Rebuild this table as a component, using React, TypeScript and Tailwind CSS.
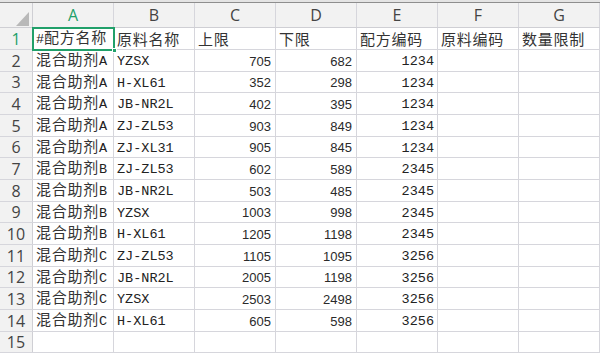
import React from 'react'

const cols = ['A', 'B', 'C', 'D', 'E', 'F', 'G']

type Row = [string, string, string, string, string, string, string]

const rows: Row[] = [
  ['#配方名称', '原料名称', '上限', '下限', '配方编码', '原料编码', '数量限制'],
  ['混合助剂A', 'YZSX', '705', '682', '1234', '', ''],
  ['混合助剂A', 'H-XL61', '352', '298', '1234', '', ''],
  ['混合助剂A', 'JB-NR2L', '402', '395', '1234', '', ''],
  ['混合助剂A', 'ZJ-ZL53', '903', '849', '1234', '', ''],
  ['混合助剂A', 'ZJ-XL31', '905', '845', '1234', '', ''],
  ['混合助剂B', 'ZJ-ZL53', '602', '589', '2345', '', ''],
  ['混合助剂B', 'JB-NR2L', '503', '485', '2345', '', ''],
  ['混合助剂B', 'YZSX', '1003', '998', '2345', '', ''],
  ['混合助剂B', 'H-XL61', '1205', '1198', '2345', '', ''],
  ['混合助剂C', 'ZJ-ZL53', '1105', '1095', '3256', '', ''],
  ['混合助剂C', 'JB-NR2L', '2005', '1198', '3256', '', ''],
  ['混合助剂C', 'YZSX', '2503', '2498', '3256', '', ''],
  ['混合助剂C', 'H-XL61', '605', '598', '3256', '', ''],
  ['', '', '', '', '', '', ''],
]

const rowHeights = ['h-[22px]', 'h-[22px]', 'h-[21px]']

// latin bits in the Song-style cells are half width, CJK stays full width
function MixedText({ text }: { text: string }) {
  const parts: { s: string; latin: boolean }[] = []
  for (const ch of text) {
    const latin = ch.charCodeAt(0) < 128
    const last = parts[parts.length - 1]
    if (last && last.latin === latin) last.s += ch
    else parts.push({ s: ch, latin })
  }
  return (
    <span className="leading-[20px] whitespace-nowrap">
      {parts.map((p, i) =>
        p.latin ? (
          <span key={i} className="font-['Liberation_Mono',monospace] text-[13.5px] text-[#222]">
            {p.s}
          </span>
        ) : (
          <span key={i} className="font-['Noto_Sans_CJK_SC',sans-serif] text-[15px] tracking-[0.75px] text-[#333]">
            {p.s}
          </span>
        )
      )}
    </span>
  )
}

function Cell({ value, col, header }: { value: string; col: number; header: boolean }) {
  const numeric = !header && value !== '' && /^\d+$/.test(value)
  if (numeric && col !== 4) {
    return (
      <div className="w-[81px] shrink-0 border-r border-[#d6d6dc] flex items-center justify-end pr-[4px] pt-[1px] font-['Liberation_Sans',Arial,sans-serif] text-[13px] text-[#2a2a2a]">
        {value}
      </div>
    )
  }
  return (
    <div
      className={`w-[81px] shrink-0 border-r border-[#d6d6dc] flex items-center text-[#2a2a2a] ${
        numeric ? 'justify-end pr-[3px]' : 'pl-[3px]'
      }`}
    >
      <MixedText text={value} />
    </div>
  )
}

export default function App() {
  return (
    <div className="relative w-[600px] h-[353px] overflow-hidden bg-white leading-none">
      {/* top edge */}
      <div className="h-[2px] bg-[#e4e4e4]" />
      <div className="h-[1px] bg-[#8e8e8e]" />

      {/* column headers */}
      <div className="flex h-[25px] bg-[#f2f2f2] border-b border-[#cfcfd4]">
        <div className="relative w-[33px] shrink-0 border-r border-[#cfcfd4]">
          <svg className="absolute left-[16px] top-[9px]" width="13" height="14" viewBox="0 0 13 14">
            <polygon points="13,0 13,14 0,14" fill="#b9b9b9" />
          </svg>
        </div>
        {cols.map((c, i) => (
          <div
            key={c}
            className={`w-[81px] shrink-0 border-r border-[#d6d6dc] flex items-center justify-center font-['Open_Sans',sans-serif] text-[16px] ${
              i === 0 ? 'text-[#21a06a]' : 'text-[#444]'
            }`}
          >
            {c}
          </div>
        ))}
      </div>

      {/* rows */}
      {rows.map((r, ri) => (
        <div key={ri} className={`flex ${rowHeights[ri % 3]} border-b border-[#d6d6dc]`}>
          <div
            className={`w-[33px] shrink-0 bg-[#f2f2f2] border-r border-[#cfcfd4] flex items-center justify-center font-['Open_Sans',sans-serif] text-[16px] ${
              ri === 0 ? 'text-[#21a06a]' : 'text-[#444]'
            }`}
          >
            {ri + 1}
          </div>
          {r.map((v, ci) => (
            <Cell key={ci} value={v} col={ci} header={ri === 0} />
          ))}
        </div>
      ))}

      {/* active cell A1 */}
      <div className="absolute left-[32px] top-[27px] w-[83px] h-[24px] border-2 border-[#21a06a]">
        <div className="absolute right-[-4px] bottom-[-4px] w-[5px] h-[5px] bg-[#21a06a] border border-white" />
      </div>
    </div>
  )
}
